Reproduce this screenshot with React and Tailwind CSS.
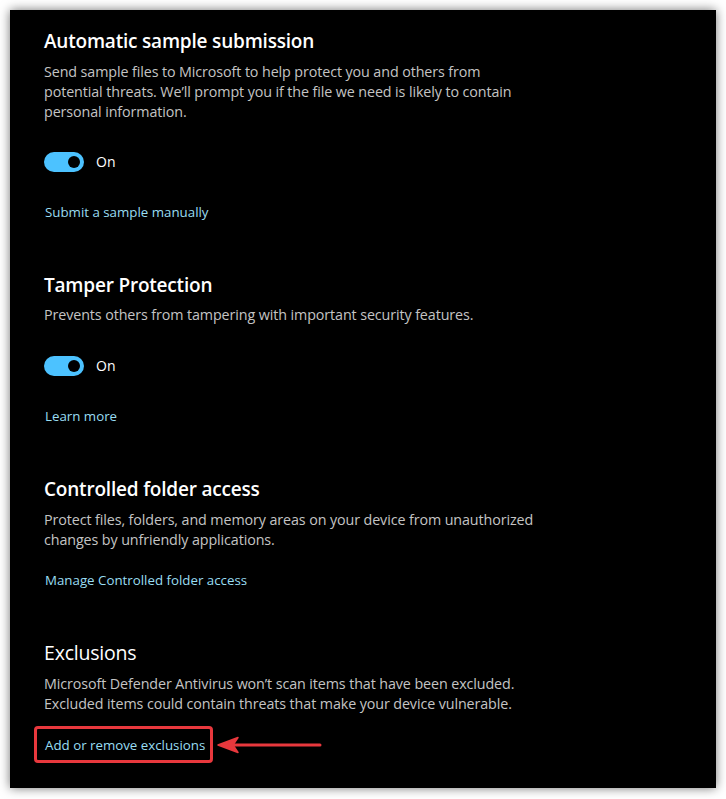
import React from "react";

const font = { fontFamily: '"Segoe UI", "Open Sans", "Noto Sans", sans-serif' };

function Toggle() {
  return (
    <div className="flex items-center h-5">
      <div className="w-10 h-5 rounded-full bg-[#4cc2ff] flex items-center justify-end pr-[4px]">
        <div className="w-3 h-3 rounded-full bg-black" />
      </div>
      <span className="ml-3 text-[14px] leading-5 text-white">On</span>
    </div>
  );
}

function Heading({ children, light }) {
  return (
    <h2 className={light ? "text-[19.5px] leading-7 font-normal text-white tracking-[-0.2px]" : "text-[19px] leading-7 font-semibold text-white tracking-[-0.2px]"}>
      {children}
    </h2>
  );
}

function Desc({ children }) {
  return <p className="text-[14.3px] leading-5 text-[#c4c4c4] w-[491px] tracking-[-0.1px]">{children}</p>;
}

function Link({ children }) {
  return <div className="text-[13.3px] leading-5 text-[#99ddf2] pl-[1px]">{children}</div>;
}

export default function App() {
  return (
    <div className="w-[726px] h-[799px] bg-white p-[10px]" style={font}>
      <div className="w-[706px] h-[778px] bg-black shadow-[0_0_10px_rgba(0,0,0,0.55)] pl-[34px] pt-[17px]">
        <Heading>Automatic sample submission</Heading>
        <div className="mt-[7px]">
          <Desc>
            Send sample files to Microsoft to help protect you and others from potential threats. We’ll prompt you if the file we need is likely to contain personal information.
          </Desc>
        </div>
        <div className="mt-[30px]"><Toggle /></div>
        <div className="mt-[30px]"><Link>Submit a sample manually</Link></div>

        <div className="mt-[49px]"><Heading>Tamper Protection</Heading></div>
        <div className="mt-[6px]">
          <Desc>Prevents others from tampering with important security features.</Desc>
        </div>
        <div className="mt-[31px]"><Toggle /></div>
        <div className="mt-[30px]"><Link>Learn more</Link></div>

        <div className="mt-[49px]"><Heading>Controlled folder access</Heading></div>
        <div className="mt-[7px]">
          <Desc>Protect files, folders, and memory areas on your device from unauthorized changes by unfriendly applications.</Desc>
        </div>
        <div className="mt-[20px]"><Link>Manage Controlled folder access</Link></div>

        <div className="mt-[49px]"><Heading light>Exclusions</Heading></div>
        <div className="mt-[7px]">
          <Desc>Microsoft Defender Antivirus won’t scan items that have been excluded. Excluded items could contain threats that make your device vulnerable.</Desc>
        </div>
        <div className="mt-[12px] -ml-[10px] flex items-center">
          <div className="h-[37px] w-[179px] border-[3px] border-[#e8383d] rounded-[4px] flex items-center pl-[8px]">
            <span className="text-[13.3px] leading-5 text-[#99ddf2]">Add or remove exclusions</span>
          </div>
          <svg width="106" height="20" viewBox="0 0 106 20" className="ml-[3px]">
            <path d="M18 10 H104" stroke="#e8383d" strokeWidth="3" strokeLinecap="round" />
            <path d="M2 10 L22 2.5 L17 10 L22 17.5 Z" fill="#e8383d" stroke="#e8383d" strokeWidth="1.5" strokeLinejoin="round" />
          </svg>
        </div>
      </div>
    </div>
  );
}
